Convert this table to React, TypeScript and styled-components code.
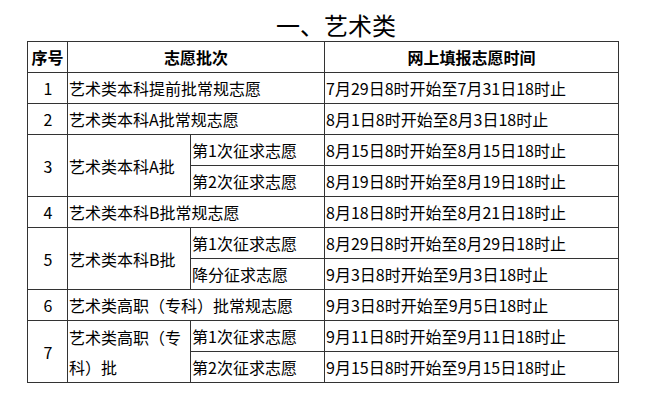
import React from "react";
import styled, { createGlobalStyle } from "styled-components";

type SubRow = { name: string; time: string };
type Batch = {
  no: number;
  name: string;
  time?: string;
  subs?: SubRow[];
};

const batches: Batch[] = [
  { no: 1, name: "艺术类本科提前批常规志愿", time: "7月29日8时开始至7月31日18时止" },
  { no: 2, name: "艺术类本科A批常规志愿", time: "8月1日8时开始至8月3日18时止" },
  {
    no: 3,
    name: "艺术类本科A批",
    subs: [
      { name: "第1次征求志愿", time: "8月15日8时开始至8月15日18时止" },
      { name: "第2次征求志愿", time: "8月19日8时开始至8月19日18时止" },
    ],
  },
  { no: 4, name: "艺术类本科B批常规志愿", time: "8月18日8时开始至8月21日18时止" },
  {
    no: 5,
    name: "艺术类本科B批",
    subs: [
      { name: "第1次征求志愿", time: "8月29日8时开始至8月29日18时止" },
      { name: "降分征求志愿", time: "9月3日8时开始至9月3日18时止" },
    ],
  },
  { no: 6, name: "艺术类高职（专科）批常规志愿", time: "9月3日8时开始至9月5日18时止" },
  {
    no: 7,
    name: "艺术类高职（专科）批",
    subs: [
      { name: "第1次征求志愿", time: "9月11日8时开始至9月11日18时止" },
      { name: "第2次征求志愿", time: "9月15日8时开始至9月15日18时止" },
    ],
  },
];

const GlobalStyle = createGlobalStyle`
  body {
    margin: 0;
    background: #ffffff;
    color: #000000;
    font-family: "Noto Sans CJK SC", "Noto Sans", sans-serif;
  }
`;

const Page = styled.div`
  padding: 13px 0 0 27px;
`;

const Title = styled.h2`
  width: 566px;
  margin: 0 0 4px;
  padding-left: 26px;
  font-size: 24px;
  line-height: 24px;
  font-weight: 400;
  text-align: center;
`;

const Table = styled.table`
  width: 592px;
  table-layout: fixed;
  border-collapse: collapse;
  font-size: 16px;
`;

const Head = styled.th`
  height: 30px;
  padding: 0;
  border: 1px solid #333333;
  font-weight: 700;
  text-align: center;
  line-height: 30px;
`;

const Cell = styled.td<{ $center?: boolean }>`
  height: 30px;
  padding: 0 0 0 1px;
  border: 1px solid #333333;
  text-align: ${(p) => (p.$center ? "center" : "left")};
  line-height: 30px;
  vertical-align: middle;
  white-space: ${(p) => (p.$center ? "nowrap" : "normal")};
  overflow: hidden;
`;

const App = () => {
  return (
    <>
      <GlobalStyle />
      <Page>
        <Title>一、艺术类</Title>
        <Table>
          <colgroup>
            <col style={{ width: 40 }} />
            <col style={{ width: 123 }} />
            <col style={{ width: 134 }} />
            <col style={{ width: 294 }} />
          </colgroup>
          <thead>
            <tr>
              <Head>序号</Head>
              <Head colSpan={2}>志愿批次</Head>
              <Head>网上填报志愿时间</Head>
            </tr>
          </thead>
          <tbody>
            {batches.map((b) =>
              b.subs ? (
                b.subs.map((s, i) => (
                  <tr key={`${b.no}-${i}`}>
                    {i === 0 && (
                      <>
                        <Cell $center rowSpan={b.subs!.length}>
                          {b.no}
                        </Cell>
                        <Cell rowSpan={b.subs!.length}>{b.name}</Cell>
                      </>
                    )}
                    <Cell>{s.name}</Cell>
                    <Cell>{s.time}</Cell>
                  </tr>
                ))
              ) : (
                <tr key={b.no}>
                  <Cell $center>{b.no}</Cell>
                  <Cell colSpan={2}>{b.name}</Cell>
                  <Cell>{b.time}</Cell>
                </tr>
              )
            )}
          </tbody>
        </Table>
      </Page>
    </>
  );
};

export default App;
